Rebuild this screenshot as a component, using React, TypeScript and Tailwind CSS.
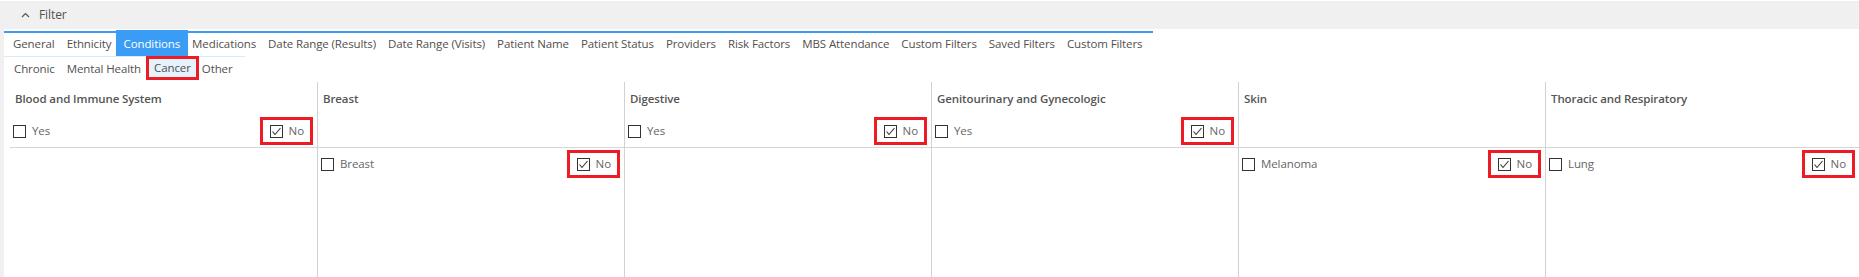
import React from 'react';

const MAIN_TABS = [
  'General',
  'Ethnicity',
  'Conditions',
  'Medications',
  'Date Range (Results)',
  'Date Range (Visits)',
  'Patient Name',
  'Patient Status',
  'Providers',
  'Risk Factors',
  'MBS Attendance',
  'Custom Filters',
  'Saved Filters',
  'Custom Filters',
];

const SUB_TABS = ['Chronic', 'Mental Health', 'Cancer', 'Other'];

type Group = {
  title: string;
  yesNo: boolean;
  item?: string;
};

const GROUPS: Group[] = [
  { title: 'Blood and Immune System', yesNo: true },
  { title: 'Breast', yesNo: false, item: 'Breast' },
  { title: 'Digestive', yesNo: true },
  { title: 'Genitourinary and Gynecologic', yesNo: true },
  { title: 'Skin', yesNo: false, item: 'Melanoma' },
  { title: 'Thoracic and Respiratory', yesNo: false, item: 'Lung' },
];

const Box: React.FC<{ checked?: boolean }> = ({ checked }) => (
  <span className="w-[13px] h-[13px] border border-[#333] bg-white flex items-center justify-center shrink-0">
    {checked && (
      <svg width="11" height="11" viewBox="0 0 11 11">
        <polyline points="1.5,5.5 4,8.5 9.5,2" fill="none" stroke="#333" strokeWidth="1.1" />
      </svg>
    )}
  </span>
);

const Check: React.FC<{ label: string; checked?: boolean }> = ({ label, checked }) => (
  <label className="flex items-center gap-[6px] text-[#666] whitespace-nowrap">
    <Box checked={checked} />
    <span>{label}</span>
  </label>
);

// the "No" boxes are outlined in red in the screenshot
const MarkedNo: React.FC = () => (
  <div className="h-[28px] flex items-center border-[3px] border-[#ed1c24] pl-[7px] pr-[6px]">
    <Check label="No" checked />
  </div>
);

const App: React.FC = () => {
  return (
    <div className="w-[1859px] h-[277px] overflow-hidden bg-white text-[11.5px] tracking-[-0.1px] leading-[16px] text-[#505050] font-['Open_Sans',sans-serif]">
      {/* Filter header */}
      <div className="mt-px h-[28px] bg-[#f0f0f0] flex items-center pl-[21px] gap-[9px]">
        <svg width="9" height="6" viewBox="0 0 9 6">
          <polyline points="1,5 4.5,1.5 8,5" fill="none" stroke="#555" strokeWidth="1.2" />
        </svg>
        <span className="text-[12px]">Filter</span>
      </div>

      <div className="h-[248px] border-l-4 border-[#f0f0f0] pt-[2px] flex flex-col">
        {/* main tabs */}
        <div className="w-[1149px] border-t-2 border-[#3b9cf5] h-[25px] flex pl-[3px]">
          {MAIN_TABS.map((t, i) =>
            t === 'Conditions' ? (
              <div key={i} className="-mt-[3px] h-[26px] pt-[6px] px-[8px] -mx-[2px] bg-[#3b9cf5] text-white whitespace-nowrap">
                {t}
              </div>
            ) : (
              <div key={i} className="h-[23px] pt-[3px] px-[6px] whitespace-nowrap">
                {t}
              </div>
            )
          )}
        </div>

        {/* sub tabs */}
        <div className="self-start border-t border-[#d9ebf9] h-[23px] flex pl-[4px] pr-[6px]">
          {SUB_TABS.map((t) =>
            t === 'Cancer' ? (
              <div
                key={t}
                className="-mt-px h-[24px] border-[3px] border-[#ed1c24] bg-[#e5f1fb] px-[5px] -ml-px -mr-[3px] flex items-center whitespace-nowrap"
              >
                {t}
              </div>
            ) : (
              <div key={t} className="h-[22px] pt-[4px] px-[6px] whitespace-nowrap">
                {t}
              </div>
            )
          )}
        </div>

        {/* condition groups */}
        <div className="mt-[3px] ml-[6px] flex-1 grid grid-cols-[repeat(5,307px)_1fr]">
          {GROUPS.map((g, i) => (
            <div key={g.title} className={`flex flex-col ${i > 0 ? 'border-l border-[#d2d2d2]' : ''}`}>
              <div className="border-b border-[#d6d6d6]">
                <div className="h-[33px] flex items-center pl-[5px] font-semibold text-[#555]">{g.title}</div>
                <div className="h-[32px] flex items-center justify-between pl-[3px] pr-[4px]">
                  {g.yesNo && (
                    <>
                      <Check label="Yes" />
                      <MarkedNo />
                    </>
                  )}
                </div>
              </div>
              {g.item && (
                <div className="h-[32px] flex items-center justify-between pl-[3px] pr-[4px]">
                  <Check label={g.item} />
                  <MarkedNo />
                </div>
              )}
            </div>
          ))}
        </div>
      </div>
    </div>
  );
};

export default App;
